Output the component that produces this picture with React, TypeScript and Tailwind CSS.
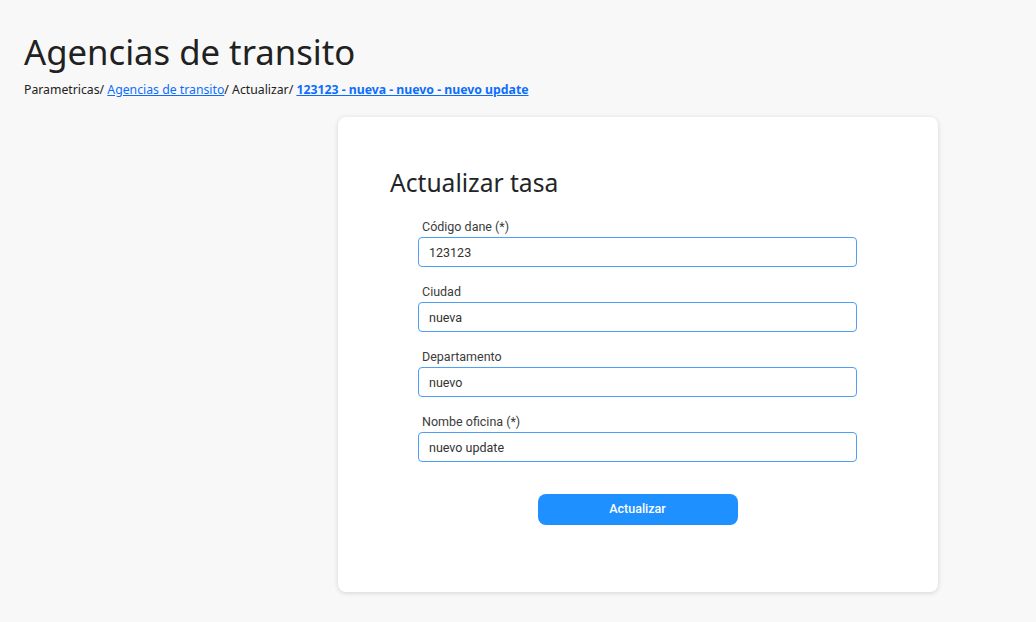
import React from "react";

const fields = [
  { label: "Código dane (*)", value: "123123" },
  { label: "Ciudad", value: "nueva" },
  { label: "Departamento", value: "nuevo" },
  { label: "Nombe oficina (*)", value: "nuevo update" },
];

export default function App() {
  return (
    <div className="min-h-[622px] w-full bg-[#f8f8f8] pt-[32px] pb-[30px]" style={{ fontFamily: '"Noto Sans", "Open Sans", sans-serif' }}>
      <div className="px-[24px]">
        <h1 className="text-[34.7px] leading-[40px] text-[#212121] font-normal">Agencias de transito</h1>
        <div className="mt-[10px] text-[12.25px] leading-[16px] text-[#212121]">
          Parametricas/{" "}
          <a className="text-[#0d6efd] underline" href="#">Agencias de transito</a>
          / Actualizar/{" "}
          <a className="text-[#0d6efd] underline font-bold" href="#">123123 - nueva - nuevo - nuevo update</a>
        </div>
      </div>
      <div className="mt-[19px] ml-[338px] w-[600px] h-[475px] bg-white rounded-[8px] shadow-[0_1px_5px_rgba(0,0,0,0.15)] pt-[50px] px-[52px]">
        <h2 className="text-[24.6px] leading-[32px] text-[#212529] font-normal">Actualizar tasa</h2>
        <div className="mt-[20px] ml-[28px] w-[439px]" style={{ fontFamily: 'Roboto, "Noto Sans", sans-serif' }}>
          {fields.map((f, i) => (
            <div key={i} className={i > 0 ? "mt-[17px]" : ""}>
              <label className="block pl-[4px] text-[12.5px] leading-[16px] text-[#3c3c3c]">{f.label}</label>
              <input
                readOnly
                value={f.value}
                className="mt-[2px] block w-[439px] h-[30px] rounded-[4px] border border-[#4da0f5] bg-white px-[10px] text-[12.5px] text-[#333] outline-none"
              />
            </div>
          ))}
          <div className="mt-[32px] flex justify-center">
            <button className="w-[200px] h-[31px] rounded-[8px] bg-[#1e90ff] text-white text-[12.5px] font-medium">Actualizar</button>
          </div>
        </div>
      </div>
    </div>
  );
}
